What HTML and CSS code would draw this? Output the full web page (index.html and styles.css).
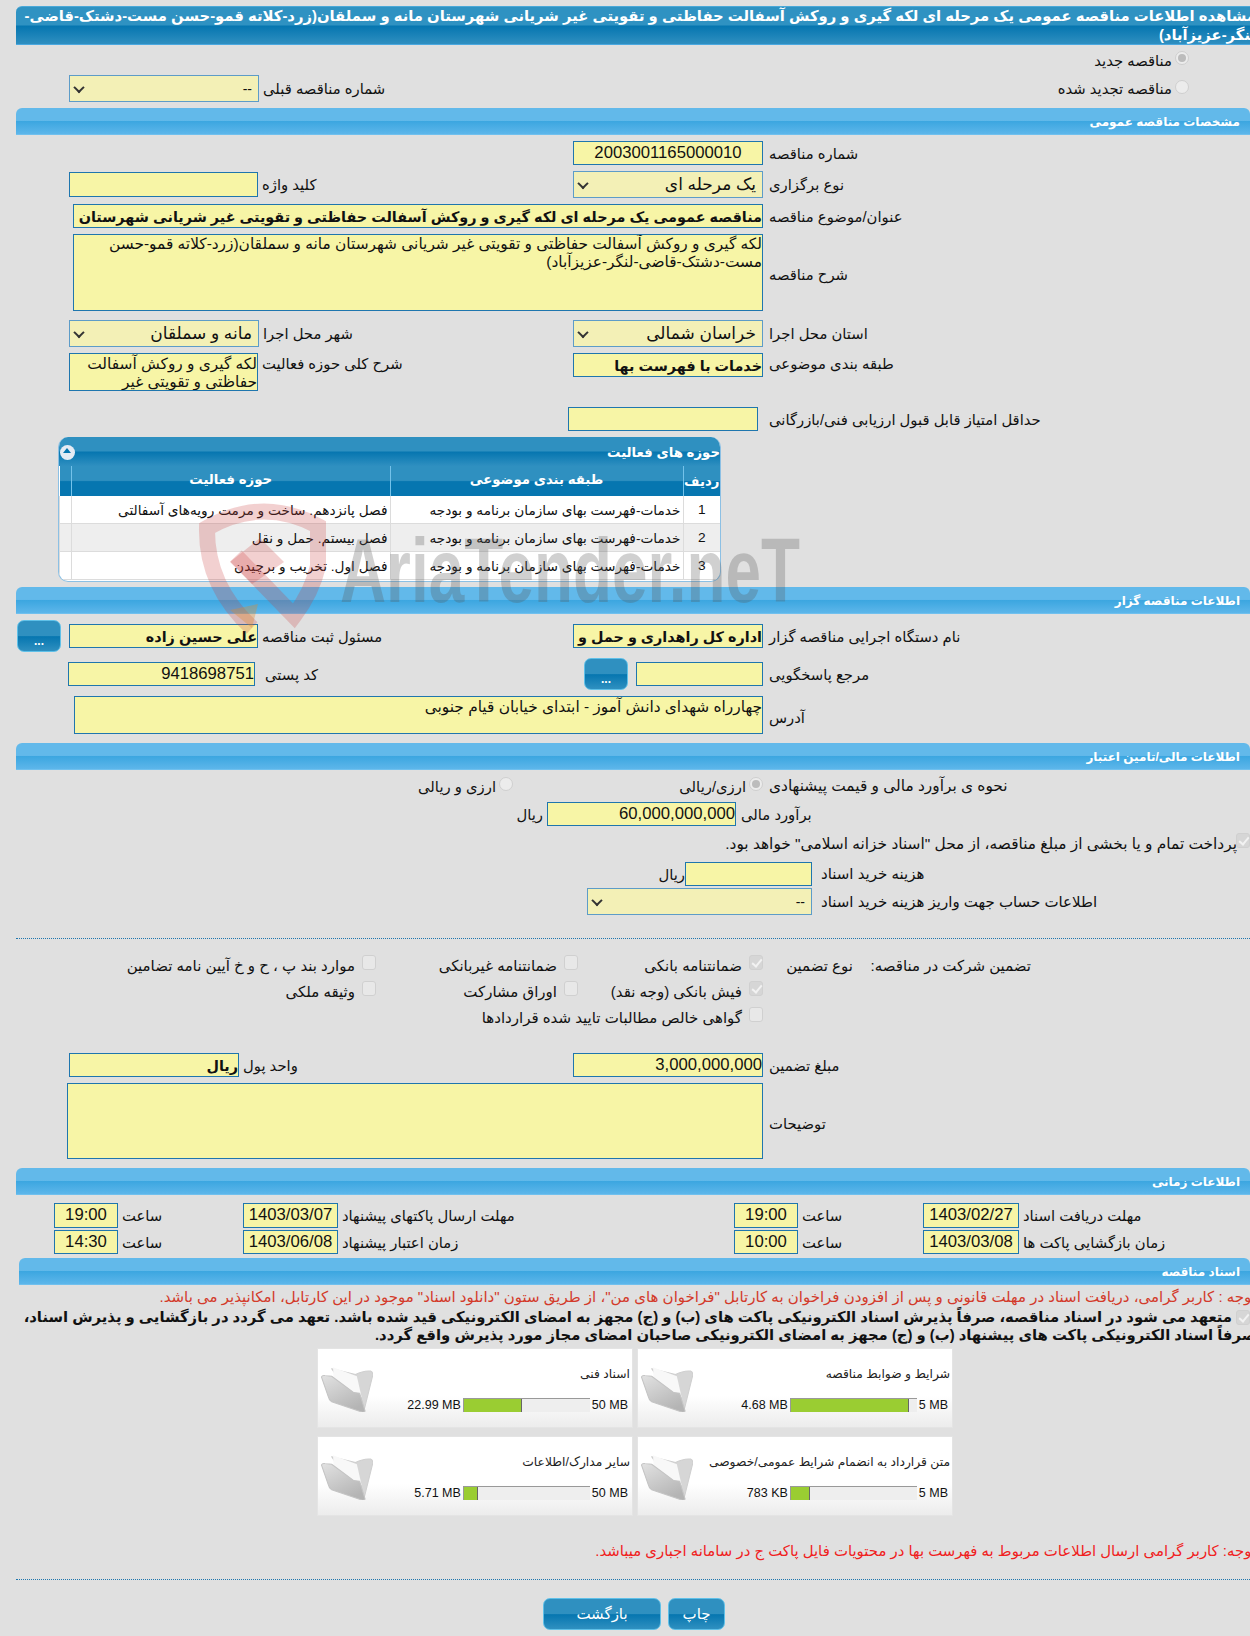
FILE: index.html
```html
<!DOCTYPE html>
<html lang="fa" dir="rtl">
<head>
    <meta charset="UTF-8">
    <title>مشاهده اطلاعات مناقصه</title>
    <link rel="stylesheet" href="styles.css">
</head>
<body>
<div class="page">
    <div class="title"><div class="title-text">مشاهده اطلاعات مناقصه عمومی یک مرحله ای لکه گیری و روکش آسفالت حفاظتی و تقویتی غیر شریانی شهرستان مانه و سملقان(زرد-کلاته قمو-حسن مست-دشتک-قاضی-<br>لنگر-عزیزآباد)</div></div>

    <div class="row row-r1">
        <div class="opt opt-main"><span class="radio on"></span>مناقصه جدید</div>
    </div>
    <div class="row row-r2">
        <div class="opt opt-renew"><span class="radio"></span>مناقصه تجدید شده</div>
        <div class="lbl lbl-b">شماره مناقصه قبلی</div>
        <div class="select w190"><span>--</span><i class="arrow"></i></div>
    </div>

    <div class="band">مشخصات مناقصه عمومی</div>
    <div class="group">
        <div class="row">
            <div class="lbl lbl-a">شماره مناقصه</div>
            <div class="field w190 center">2003001165000010</div>
        </div>
        <div class="row">
            <div class="lbl lbl-a">نوع برگزاری</div>
            <div class="select w190 big"><span>یک مرحله ای</span><i class="arrow"></i></div>
            <div class="lbl lbl-c">کلید واژه</div>
            <div class="field w189 h25"></div>
        </div>
        <div class="row">
            <div class="lbl lbl-a">عنوان/موضوع مناقصه</div>
            <div class="field w690 bold">مناقصه عمومی یک مرحله ای لکه گیری و روکش آسفالت حفاظتی و تقویتی غیر شریانی شهرستان مانه و سملقان(زرد-کلاته قمو-حسن مست-دشتک-قاضی-لنگر-عزیزآباد)</div>
        </div>
        <div class="row">
            <div class="lbl lbl-a low">شرح مناقصه</div>
            <div class="area w690 h77">لکه گیری و روکش آسفالت حفاظتی و تقویتی غیر شریانی شهرستان مانه و سملقان(زرد-کلاته قمو-حسن مست-دشتک-قاضی-لنگر-عزیزآباد)</div>
        </div>
        <div class="row mt3">
            <div class="lbl lbl-a">استان محل اجرا</div>
            <div class="select w190 big"><span>خراسان شمالی</span><i class="arrow"></i></div>
            <div class="lbl lbl-b">شهر محل اجرا</div>
            <div class="select w190 big"><span>مانه و سملقان</span><i class="arrow"></i></div>
        </div>
        <div class="row top">
            <div class="lbl lbl-a up">طبقه بندی موضوعی</div>
            <div class="field w190 bold">خدمات با فهرست بها</div>
            <div class="lbl lbl-c up">شرح کلی حوزه فعالیت</div>
            <div class="area w189 h38 tight">لکه گیری و روکش آسفالت حفاظتی و تقویتی غیر</div>
        </div>
        <div class="row mt9">
            <div class="lbl lbl-a">حداقل امتیاز قابل قبول ارزیابی فنی/بازرگانی</div>
            <div class="field w190 shift5"></div>
        </div>

        <div class="panel">
            <div class="panel-head">
                <span>حوزه های فعالیت</span>
                <i class="collapse"></i>
            </div>
            <table class="grid">
                <thead>
                    <tr><th class="c-n">ردیف</th><th class="c-s">طبقه بندی موضوعی</th><th>حوزه فعالیت</th><th class="c-e"></th></tr>
                </thead>
                <tbody>
                    <tr><td class="c-n">1</td><td>خدمات-فهرست بهای سازمان برنامه و بودجه</td><td>فصل پانزدهم. ساخت و مرمت رویه‌های آسفالتی</td><td></td></tr>
                    <tr class="alt"><td class="c-n">2</td><td>خدمات-فهرست بهای سازمان برنامه و بودجه</td><td>فصل بیستم. حمل و نقل</td><td></td></tr>
                    <tr><td class="c-n">3</td><td>خدمات-فهرست بهای سازمان برنامه و بودجه</td><td>فصل اول. تخریب و برچیدن</td><td></td></tr>
                </tbody>
            </table>
        </div>
    </div>

    <div class="band">اطلاعات مناقصه گزار</div>
    <div class="group">
        <div class="row">
            <div class="lbl lbl-a">نام دستگاه اجرایی مناقصه گزار</div>
            <div class="field w190 bold">اداره کل راهداری و حمل و نقل جاده ای خراسان شمالی</div>
            <div class="lbl lbl-c">مسئول ثبت مناقصه</div>
            <div class="field w189 bold">علی حسین زاده</div>
            <button class="btn btn-dots">...</button>
        </div>
        <div class="row">
            <div class="lbl lbl-a">مرجع پاسخگویی</div>
            <div class="field w127"></div>
            <button class="btn btn-dots">...</button>
            <div class="lbl lbl-d">کد پستی</div>
            <div class="field w187 num">9418698751</div>
        </div>
        <div class="row">
            <div class="lbl lbl-a low">آدرس</div>
            <div class="area w689 h38 tight">چهارراه شهدای دانش آموز - ابتدای خیابان قیام جنوبی</div>
        </div>
    </div>

    <div class="band">اطلاعات مالی/تامین اعتبار</div>
    <div class="group">
        <div class="row h20">
            <div class="lbl lbl-a lbl-wide">نحوه ی برآورد مالی و قیمت پیشنهادی</div>
            <div class="opt opt-cur"><span class="radio on"></span>ارزی/ریالی</div>
            <div class="opt"><span class="radio"></span>ارزی و ریالی</div>
        </div>
        <div class="row">
            <div class="lbl lbl-e">برآورد مالی</div>
            <div class="field w189 num">60,000,000,000</div>
            <div class="unit">ریال</div>
        </div>
        <div class="row h20 mt2">
            <span class="check on"></span>
            <div class="plain">پرداخت تمام و یا بخشی از مبلغ مناقصه، از محل "اسناد خزانه اسلامی" خواهد بود.</div>
        </div>
        <div class="row mt2">
            <div class="lbl lbl-f">هزینه خرید اسناد</div>
            <div class="field w127"></div>
            <div class="unit tight-unit">ریال</div>
        </div>
        <div class="row mt-4">
            <div class="lbl lbl-f">اطلاعات حساب جهت واریز هزینه خرید اسناد</div>
            <div class="select w225"><span>--</span><i class="arrow"></i></div>
        </div>
    </div>

    <div class="dots dots-1"></div>

    <div class="guarantee">
        <div>تضمین شرکت در مناقصه:</div>
        <div>نوع تضمین</div>
        <div class="opt"><span class="check on"></span>ضمانتنامه بانکی</div>
        <div class="opt"><span class="check"></span>ضمانتنامه غیربانکی</div>
        <div class="opt"><span class="check"></span>موارد بند پ ، ح و خ آیین نامه تضامین</div>
        <div></div><div></div>
        <div class="opt"><span class="check on"></span>فیش بانکی (وجه نقد)</div>
        <div class="opt"><span class="check"></span>اوراق مشارکت</div>
        <div class="opt"><span class="check"></span>وثیقه ملکی</div>
        <div></div><div></div>
        <div class="opt opt-wide"><span class="check"></span>گواهی خالص مطالبات تایید شده قراردادها</div>
    </div>

    <div class="group mt16">
        <div class="row">
            <div class="lbl lbl-a">مبلغ تضمین</div>
            <div class="field w190 num">3,000,000,000</div>
            <div class="lbl lbl-g">واحد پول</div>
            <div class="field w170 bold">ریال</div>
        </div>
        <div class="row">
            <div class="lbl lbl-a low">توضیحات</div>
            <div class="area w696 h76"></div>
        </div>
    </div>

    <div class="band">اطلاعات زمانی</div>
    <div class="times">
        <div class="t-lbl">مهلت دریافت اسناد</div>
        <div class="field center">1403/02/27</div>
        <div class="t-lbl">ساعت</div>
        <div class="field center">19:00</div>
        <div class="t-lbl">مهلت ارسال پاکتهای پیشنهاد</div>
        <div class="field center">1403/03/07</div>
        <div class="t-lbl">ساعت</div>
        <div class="field center">19:00</div>
        <div class="t-lbl">زمان بازگشایی پاکت ها</div>
        <div class="field center">1403/03/08</div>
        <div class="t-lbl">ساعت</div>
        <div class="field center">10:00</div>
        <div class="t-lbl">زمان اعتبار پیشنهاد</div>
        <div class="field center">1403/06/08</div>
        <div class="t-lbl">ساعت</div>
        <div class="field center">14:30</div>
    </div>

    <div class="band band-docs">اسناد مناقصه</div>
    <div class="notice">توجه : کاربر گرامی، دریافت اسناد در مهلت قانونی و پس از افزودن فراخوان به کارتابل "فراخوان های من"، از طریق ستون "دانلود اسناد" موجود در این کارتابل، امکانپذیر می باشد.</div>
    <div class="pledge">
        <span class="check on"></span>
        <div>متعهد می شود در اسناد مناقصه، صرفاً پذیرش اسناد الکترونیکی پاکت های (ب) و (ج) مجهز به امضای الکترونیکی قید شده باشد. تعهد می گردد در بازگشایی و پذیرش اسناد،<br><span class="pledge-2">صرفاً اسناد الکترونیکی پاکت های پیشنهاد (ب) و (ج) مجهز به امضای الکترونیکی صاحبان امضای مجاز مورد پذیرش واقع گردد.</span></div>
    </div>

    <div class="cards">
        <div class="card">
            <div class="card-body">
                <div class="card-title">شرایط و ضوابط مناقصه</div>
                <div class="meter"><span class="m-end">5 MB</span><div class="bar"><div class="fill" style="width: 93.6%"></div></div><span class="m-val">4.68 MB</span></div>
            </div>
            <svg class="folder" viewBox="0 0 150 135"><use href="#folder"></use></svg>
        </div>
        <div class="card">
            <div class="card-body">
                <div class="card-title">اسناد فنی</div>
                <div class="meter"><span class="m-end">50 MB</span><div class="bar"><div class="fill" style="width: 46%"></div></div><span class="m-val">22.99 MB</span></div>
            </div>
            <svg class="folder" viewBox="0 0 150 135"><use href="#folder"></use></svg>
        </div>
        <div class="card">
            <div class="card-body">
                <div class="card-title">متن قرارداد به انضمام شرایط عمومی/خصوصی</div>
                <div class="meter"><span class="m-end">5 MB</span><div class="bar"><div class="fill" style="width: 15.3%"></div></div><span class="m-val">783 KB</span></div>
            </div>
            <svg class="folder" viewBox="0 0 150 135"><use href="#folder"></use></svg>
        </div>
        <div class="card">
            <div class="card-body">
                <div class="card-title">سایر مدارک/اطلاعات</div>
                <div class="meter"><span class="m-end">50 MB</span><div class="bar"><div class="fill" style="width: 11.4%"></div></div><span class="m-val">5.71 MB</span></div>
            </div>
            <svg class="folder" viewBox="0 0 150 135"><use href="#folder"></use></svg>
        </div>
    </div>

    <div class="notice-2">توجه: کاربر گرامی ارسال اطلاعات مربوط به فهرست بها در محتویات فایل پاکت ج در سامانه اجباری میباشد.</div>
    <div class="dots dots-2"></div>
    <div class="actions">
        <button class="btn btn-print">چاپ</button>
        <button class="btn btn-back">بازگشت</button>
    </div>
</div>

<svg class="defs" width="0" height="0">
    <defs>
        <linearGradient id="fold-front" x1="0" y1="0" x2="0.6" y2="1">
            <stop offset="0" stop-color="#e2e2e2"/>
            <stop offset="1" stop-color="#b4b4b4"/>
        </linearGradient>
        <g id="folder" stroke-linejoin="round">
            <path d="M30 8 L100 25 Q125 12 145 15 Q152 18 150 30 L125 130 Q122 135 115 132 Z" fill="#d6d6d6" stroke="#cfcfcf" stroke-width="3"/>
            <path d="M34 4 L104 30 L118 92 L36 42 Z" fill="#f8f8f8"/>
            <path d="M0 32 Q2 27 10 28 L30 30 L95 78 L112 80 L128 132 Q125 138 118 135 L30 105 Q22 100 20 90 Z" fill="url(#fold-front)" stroke="#c4c4c4" stroke-width="3"/>
        </g>
    </defs>
</svg>

<svg class="watermark" viewBox="0 0 640 170" width="640" height="170">
    <g fill="none" stroke="#c93a3a" stroke-opacity="0.24" stroke-width="16">
        <path d="M62 128 Q16 85 17 28 Q72 -4 128 26 L128 66 Q122 92 104 116 L46 56"/>
    </g>
    <path d="M40 62 L70 38 L94 62 L62 84 Z" fill="#c93a3a" fill-opacity="0.24"/>
    <path d="M40 110 L62 128 L68 104 Z" fill="#e08a2a" fill-opacity="0.35"/>
    <text class="wm-text" x="150" y="102" textLength="460" lengthAdjust="spacingAndGlyphs">AriaTender.neT</text>
</svg>
</body>
</html>
```

FILE: styles.css
```css
html, body {
    margin: 0;
    padding: 0;
    overflow: hidden;
}

body {
    width: 1250px;
    height: 1636px;
    background-color: #e0e0e0;
    font-family: "Liberation Sans", "DejaVu Sans", sans-serif;
    font-size: 14.8px;
    color: #111;
    position: relative;
}

.page {
    margin-left: 16px;
    width: 1234px;
    padding-top: 6px;
}

/* title + section bars */
.title {
    height: 39px;
    box-sizing: border-box;
    border-radius: 6px 0 0 0;
    border-top: 1px solid #4aa8d8;
    border-bottom: 1px solid #4aa8e0;
    background: linear-gradient(#2f92c2 0, #2f92c2 48%, #0676b0 52%, #2f8fc0 100%);
    color: #fff;
    font-size: 14.8px;
    line-height: 19px;
    font-weight: bold;
    overflow: hidden;
}

.title-text {
    margin-right: -6px;
    white-space: nowrap;
}

.band {
    height: 27px;
    box-sizing: border-box;
    border-radius: 6px 6px 0 0;
    border-bottom: 1px solid #70c0ee;
    background: linear-gradient(#62b9ea 0, #62b9ea 48%, #3ba6e0 50%, #5db6ea 100%);
    color: #fff;
    font-size: 12px;
    font-weight: bold;
    line-height: 28px;
    padding-right: 10px;
}

.band-docs {
    margin-top: 4px;
    margin-left: 3px;
}

/* form rows */
.group {
    display: flex;
    flex-direction: column;
    gap: 6px;
    padding: 6px 0 9px;
}

.row {
    display: flex;
    align-items: center;
}

.row.top {
    align-items: flex-start;
}

.row-r1 {
    height: 24px;
    margin-top: 3px;
}

.row-r2 {
    height: 27px;
    margin-top: 3px;
    margin-bottom: 6px;
}

.h20 { height: 20px; }
.mt2 { margin-top: 2px; }
.mt3 { margin-top: 3px; }
.mt9 { margin-top: 10px; }
.mt16 { margin-top: 16px; }
.mt-4 { margin-top: -4px; }

.lbl {
    box-sizing: border-box;
    text-align: left;
    white-space: nowrap;
}

.lbl-a { width: 487px; padding-left: 6px; }
.lbl-b { width: 314px; padding-left: 4px; }
.lbl-c { width: 315px; padding-left: 4px; }
.lbl-d { width: 329px; padding-left: 10px; }
.lbl-e { width: 514px; padding-left: 5px; }
.lbl-f { width: 438px; padding-left: 9px; font-size: 15px; }
.lbl-g { width: 334px; padding-left: 4px; }
.lbl-wide { font-size: 15.4px; }

.up { padding-top: 2px; }
.low { padding-top: 4px; }

.field, .area, .select {
    box-sizing: border-box;
    background-color: #f7f5a6;
    border: 1px solid #1f76ae;
    font-size: 16.7px;
}

.field {
    height: 24px;
    line-height: 22px;
    white-space: nowrap;
    overflow: hidden;
}

.area {
    font-size: 15.4px;
    line-height: 18px;
    overflow: hidden;
}

.select {
    height: 27px;
    display: flex;
    align-items: center;
    justify-content: space-between;
    background-color: #f3f0b6;
    border-color: #5d9cc8;
    padding: 0 6px 0 5px;
    font-size: 14px;
}

.select.big {
    font-size: 17px;
}

.arrow {
    width: 6px;
    height: 6px;
    border-right: 2px solid #333;
    border-bottom: 2px solid #333;
    transform: rotate(45deg) translate(-1px, -1px);
}

.center { text-align: center; }

.field.bold {
    font-weight: bold;
    font-size: 14.4px;
    line-height: 24px;
}

.w127 { width: 127px; }
.w170 { width: 170px; }
.w187 { width: 187px; }
.w189 { width: 189px; }
.w190 { width: 190px; }
.w225 { width: 225px; }
.w689 { width: 689px; }
.w690 { width: 690px; }
.w696 { width: 696px; }
.h25 { height: 25px; }
.h38 { height: 38px; }
.h76 { height: 76px; }
.h77 { height: 77px; }

.tight {
    padding-top: 1px;
}

.shift5 {
    margin-right: 5px;
}

.btn {
    box-sizing: border-box;
    border: 1px solid #5fc0e8;
    border-radius: 7px;
    background: linear-gradient(#2f90c0 0, #2f90c0 50%, #0676b0 52%, #2f90c0 100%);
    color: #fff;
    font-family: inherit;
    font-size: 15px;
    padding: 0;
}

.btn-dots {
    width: 44px;
    height: 32px;
    margin-right: 8px;
    font-weight: bold;
    font-size: 12px;
    line-height: 40px;
}

.opt {
    display: flex;
    align-items: center;
    white-space: nowrap;
}

.opt-main { margin-right: 61px; }
.opt-renew { width: 677px; box-sizing: border-box; padding-right: 61px; }
.opt-cur { width: 250px; }

.radio {
    width: 14px;
    height: 14px;
    box-sizing: border-box;
    border-radius: 50%;
    border: 1px solid #cfcfcf;
    background-color: #ececec;
    margin-left: 3px;
    margin-top: -4px;
    flex: none;
    position: relative;
}

.radio.on::after {
    content: "";
    position: absolute;
    left: 2px;
    top: 2px;
    width: 8px;
    height: 8px;
    border-radius: 50%;
    background-color: #bcbcbc;
}

.check {
    width: 14px;
    height: 15px;
    box-sizing: border-box;
    border-radius: 3px;
    border: 1px solid #d0d0d0;
    background-color: #e8e8e8;
    margin-left: 7px;
    margin-top: -7px;
    flex: none;
    position: relative;
}

.check.on {
    background-color: #d6d6d6;
}

.check.on::after {
    content: "";
    position: absolute;
    left: 4px;
    top: 1px;
    width: 4px;
    height: 8px;
    border-right: 2px solid #f2f2f2;
    border-bottom: 2px solid #f2f2f2;
    transform: rotate(40deg);
}

.unit {
    margin-right: 4px;
}

.tight-unit {
    margin-right: 0;
}

.plain {
    margin-right: -8px;
    font-size: 15.4px;
}

/* activity panel */
.panel {
    width: 663px;
    height: 145px;
    margin-right: 529px;
    margin-bottom: -4px;
    box-sizing: border-box;
    background-color: #fff;
    border: 1px solid #8cc0e4;
    border-top: 0;
    border-radius: 10px;
    overflow: hidden;
}

.panel-head {
    height: 29px;
    box-sizing: border-box;
    padding-top: 2px;
    display: flex;
    align-items: center;
    justify-content: space-between;
    background: linear-gradient(#2f90c0 0, #2f90c0 48%, #0676b0 52%, #2f8fc0 100%);
    color: #fff;
    font-weight: bold;
    font-size: 13.3px;
}

.collapse {
    width: 15px;
    height: 15px;
    margin-left: 1px;
    border-radius: 50%;
    background-color: #e4ebf4;
    position: relative;
}

.collapse::after {
    content: "";
    position: absolute;
    left: 3px;
    top: 3px;
    border-left: 4px solid transparent;
    border-right: 4px solid transparent;
    border-bottom: 5px solid #0676b0;
}

.grid {
    width: 100%;
    table-layout: fixed;
    border-collapse: collapse;
}

.grid th {
    height: 30px;
    padding: 0 0 4px;
    box-sizing: border-box;
    background: linear-gradient(#2f90c0 0, #2f90c0 48%, #0676b0 52%, #0676b0 100%);
    border-left: 1px solid #74c2ea;
    color: #fff;
    font-size: 13.3px;
    font-weight: bold;
    text-align: center;
}

.grid td {
    height: 27px;
    padding: 0 2px;
    border-left: 1px solid #dcdcdc;
    border-bottom: 1px solid #dcdcdc;
    font-size: 13.7px;
    white-space: nowrap;
    overflow: hidden;
}

.grid .alt td {
    background-color: #eee;
}

.grid .c-n {
    width: 37px;
    padding: 0;
    text-align: center;
}

.grid .c-s {
    width: 293px;
}

.grid .c-e {
    width: 12px;
    border-left: 0;
}

/* guarantee block */
.dots {
    border-top: 1px dotted #1f76ae;
}

.dots-1 {
    margin-top: 14px;
}

.guarantee {
    display: grid;
    grid-template-columns: 178px 90px 185px 202px 1fr;
    grid-auto-rows: 26px;
    align-items: center;
    padding-right: 219px;
    margin-top: 14px;
    font-size: 15px;
}

.guarantee .opt-wide {
    grid-column: span 3;
}

.times {
    display: grid;
    grid-template-columns: 231px 96px 125px 64px 396px 95px 125px 64px;
    grid-template-rows: 25px 24px;
    row-gap: 2px;
    align-items: center;
    margin-top: 8px;
}

.times .field {
    height: 100%;
}

.t-lbl {
    text-align: left;
    padding-left: 4px;
    white-space: nowrap;
}

/* documents */
.notice {
    margin-top: 2px;
    margin-right: -6px;
    height: 21px;
    line-height: 20px;
    font-size: 15px;
    color: #d33a2a;
    white-space: nowrap;
}

.pledge {
    display: flex;
    font-weight: bold;
    font-size: 14.8px;
    line-height: 18px;
    white-space: nowrap;
    height: 40px;
}

.pledge .check {
    margin-left: 4px;
    margin-top: 2px;
}

.pledge-2 {
    margin-right: -24px;
    display: inline-block;
}

.cards {
    display: grid;
    grid-template-columns: 316px 316px;
    grid-auto-rows: 80px;
    column-gap: 4px;
    row-gap: 8px;
    margin-right: 297px;
}

.card {
    display: flex;
    box-sizing: border-box;
    border: 1px solid #e4e4e4;
    background: linear-gradient(#fff 0, #fff 60%, #ececec 100%);
    padding-right: 2px;
}

.card-body {
    flex: 1;
    min-width: 0;
}

.card-title {
    font-size: 12.3px;
    margin-top: 18px;
    height: 31px;
    white-space: nowrap;
    color: #222;
}

.meter {
    display: flex;
    align-items: center;
    font-size: 12.5px;
}

.m-end {
    direction: ltr;
    margin: 0 2px 0 2px;
}

.m-val {
    direction: ltr;
    margin-right: 2px;
}

.bar {
    width: 127px;
    height: 14px;
    box-sizing: border-box;
    background-color: #eee;
    border-top: 1px solid #999;
    border-left: 1px solid #999;
    direction: ltr;
    flex: none;
}

.fill {
    height: 100%;
    background-color: #9acd32;
    border-right: 1px solid #666;
    box-sizing: border-box;
}

.folder {
    width: 52px;
    height: 46px;
    margin: 17px 4px 0 3px;
    flex: none;
}

.notice-2 {
    margin-top: 25px;
    margin-right: -6px;
    color: #f02020;
    font-size: 14.9px;
    line-height: 20px;
    white-space: nowrap;
}

.dots-2 {
    margin-top: 18px;
}

.actions {
    display: flex;
    gap: 7px;
    margin-top: 18px;
    margin-right: 525px;
}

.btn-print {
    width: 57px;
    height: 32px;
}

.btn-back {
    width: 118px;
    height: 32px;
}

.defs {
    position: absolute;
}

/* site watermark sits over the form */
.watermark {
    position: absolute;
    left: 190px;
    top: 500px;
    pointer-events: none;
    direction: ltr;
}

.wm-text {
    font-family: "Liberation Sans", sans-serif;
    font-weight: bold;
    font-size: 90px;
    fill: #555;
    fill-opacity: 0.28;
}
```
